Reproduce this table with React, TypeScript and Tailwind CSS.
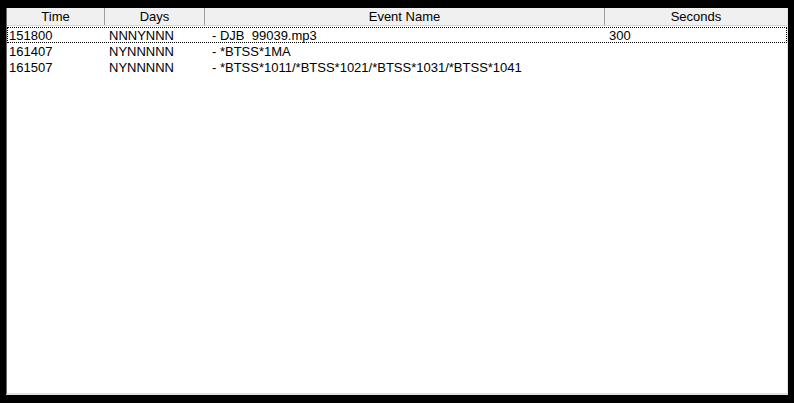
const columns = [
  { label: "Time", width: "w-[98px]" },
  { label: "Days", width: "w-[100px]" },
  { label: "Event Name", width: "w-[400px]" },
  { label: "Seconds", width: "flex-1" },
]

const rows = [
  { time: "151800", days: "NNNYNNN", event: "- DJB  99039.mp3", seconds: "300", focused: true },
  { time: "161407", days: "NYNNNNN", event: "- *BTSS*1MA", seconds: "" },
  { time: "161507", days: "NYNNNNN", event: "- *BTSS*1011/*BTSS*1021/*BTSS*1031/*BTSS*1041", seconds: "" },
]

export default function App() {
  return (
    <div className="h-[403px] w-[794px] bg-black pl-[6px] pt-[8px] font-['Liberation_Sans',Arial,sans-serif] text-[13px] leading-[16px] text-black">
      <div className="flex h-[387px] w-[782px] flex-col border-b-2 border-l border-r border-b-[#e3e3e3] border-l-[#696969] border-r-[#e3e3e3] bg-white">
        <div className="flex h-[18px] border-b border-[#d5d5d5] bg-[#f0f0f0]">
          {columns.map((c, i) => (
            <div
              key={c.label}
              className={`${c.width} flex h-[17px] items-center justify-center ${i < columns.length - 1 ? "border-r border-[#a0a0a0]" : ""}`}
            >
              {c.label}
            </div>
          ))}
        </div>
        <div className="flex flex-col pt-px">
          {rows.map((r) => (
            <div
              key={r.time}
              className={`flex h-[16px] whitespace-pre ${r.focused ? "border border-dotted border-black" : "border border-transparent"}`}
            >
              <div className="w-[98px] pl-px">{r.time}</div>
              <div className="w-[100px] pl-[3px]">{r.days}</div>
              <div className="w-[400px] pl-[6px]">{r.event}</div>
              <div className="flex-1 pl-[3px]">{r.seconds}</div>
            </div>
          ))}
        </div>
      </div>
    </div>
  )
}
